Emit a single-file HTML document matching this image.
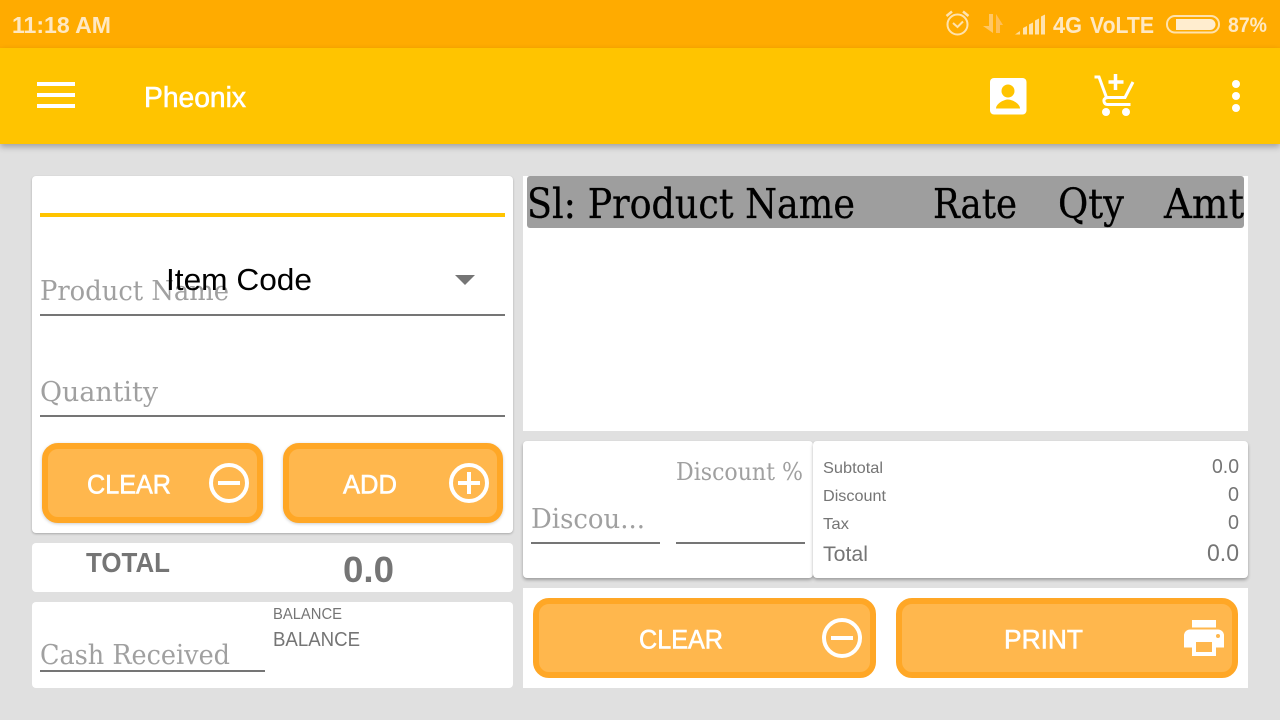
<!DOCTYPE html>
<html><head><meta charset="utf-8"><style>
html,body{margin:0;padding:0}
body{width:1280px;height:720px;position:relative;overflow:hidden;background:#e0e0e0;font-family:"Liberation Sans",sans-serif}
.a{position:absolute}
.card{position:absolute;background:#fff;border-radius:4px}
.sh{box-shadow:0 2px 3px rgba(0,0,0,.3)}
.line{position:absolute;height:2px;background:#757575}
.btn{position:absolute;box-sizing:border-box;background:#ffb74d;border:6px solid #ffa726;border-radius:16px;height:80px}
svg{position:absolute;left:0;top:0}
text{font-family:"Liberation Sans",sans-serif}
.s{font-family:"DejaVu Serif",serif;fill:#a0a0a0}
.k{font-family:"DejaVu Serif",serif;fill:#000;stroke:#000;stroke-width:.3px}
.g{fill:#757575}
.st{fill:#ffe8c2;font-weight:bold}
.w{fill:#fff;stroke:#fff;stroke-width:.6px}
</style></head><body>
<div class="a" style="left:0;top:0;width:1280px;height:48px;background:#ffab00"></div>
<div class="a" style="left:0;top:48px;width:1280px;height:96px;background:#ffc400;box-shadow:0 3px 6px rgba(0,0,0,.28)"></div>

<div class="a" style="left:37px;top:82px;width:38px;height:4px;background:#fff"></div>
<div class="a" style="left:37px;top:93px;width:38px;height:4px;background:#fff"></div>
<div class="a" style="left:37px;top:104px;width:38px;height:4px;background:#fff"></div>

<div class="card" style="left:32px;top:176px;width:481px;height:357px;box-shadow:0 1px 2px rgba(0,0,0,.25)"></div>
<div class="a" style="left:40px;top:213px;width:465px;height:4px;background:#ffc400"></div>
<div class="line" style="left:40px;top:314px;width:465px"></div>
<div class="line" style="left:40px;top:415px;width:465px"></div>
<div class="btn" style="left:42px;top:443px;width:221px;box-shadow:0 1px 3px rgba(0,0,0,.2)"></div>
<div class="btn" style="left:283px;top:443px;width:220px;box-shadow:0 1px 3px rgba(0,0,0,.2)"></div>

<div class="card" style="left:32px;top:543px;width:481px;height:49px"></div>
<div class="card" style="left:32px;top:602px;width:481px;height:86px"></div>
<div class="line" style="left:40px;top:670px;width:225px"></div>

<div class="a" style="left:523px;top:176px;width:725px;height:255px;background:#fff"></div>
<div class="a" style="left:527px;top:176px;width:717px;height:52px;background:#9e9e9e;border-radius:3px"></div>

<div class="card sh" style="left:523px;top:441px;width:290px;height:137px"></div>
<div class="card sh" style="left:813px;top:441px;width:435px;height:137px"></div>
<div class="line" style="left:531px;top:542px;width:129px"></div>
<div class="line" style="left:676px;top:542px;width:129px"></div>

<div class="a" style="left:523px;top:588px;width:725px;height:100px;background:#fff"></div>
<div class="btn" style="left:533px;top:598px;width:343px"></div>
<div class="btn" style="left:896px;top:598px;width:342px"></div>

<svg width="1280" height="720" viewBox="0 0 1280 720">
<!-- status bar -->
<text class="st" x="12" y="33" font-size="23" textLength="99" lengthAdjust="spacingAndGlyphs">11:18 AM</text>
<g fill="none" stroke="#ffe2ad" stroke-width="2">
<circle cx="957.500" cy="24.500" r="10"/>
<path d="M953 23l4.500 4 5.500-5.500"/>
<path d="M946.500 16l5.500-4.500M968.500 16l-5.500-4.500" stroke-width="2.500"/>
</g>
<path d="M989 14h4v19l-10-7h6z" fill="#ffc766"/>
<path d="M996 33h4v-8h3l-7-11z" fill="#ffbe57"/>
<g fill="#ffe2ad">
<path d="M1015 34.500l5-3.500v3.500z" opacity=".85"/>
<path d="M1023 34.500v-6.500l4-2v8.500z"/>
<path d="M1029 34.500v-10l4-2v12z"/>
<path d="M1035 34.500v-14l4-2v16z"/>
<path d="M1041 34.500v-18l4-2v20z"/>
</g>
<text class="st" x="1053" y="33" font-size="23" textLength="29" lengthAdjust="spacingAndGlyphs">4G</text>
<text class="st" x="1090" y="33" font-size="23" textLength="64" lengthAdjust="spacingAndGlyphs">VoLTE</text>
<rect x="1167" y="16" width="52" height="16.500" rx="8" fill="none" stroke="#ffe2ad" stroke-width="2"/>
<path d="M1176 19h34a5.500 5.500 0 0 1 0 11h-34z" fill="#ffedcf"/>
<text class="st" x="1228" y="32" font-size="21" textLength="39" lengthAdjust="spacingAndGlyphs">87%</text>

<!-- app bar -->
<text class="w" x="144" y="107" font-size="28.500" textLength="102" lengthAdjust="spacingAndGlyphs">Pheonix</text>
<rect x="990" y="78" width="36.500" height="36.500" rx="4" fill="#fff"/>
<circle cx="1008" cy="91" r="6.500" fill="#ffc400"/>
<path d="M996 108.500c0-5 8-9 12-9s12 4 12 9z" fill="#ffc400"/>
<g fill="none" stroke="#fff" stroke-width="3">
<path d="M1094.500 77h4.500l7.500 20.500"/>
<path d="M1133 82l-8 15.500h-17c-3 0-4.500 2-4 4 .4 1.800 1.500 3 3.500 3h23"/>
<path d="M1115.500 74v16M1108.500 82h15" stroke-width="3.500"/>
</g>
<circle cx="1106" cy="112" r="4" fill="#fff"/>
<circle cx="1126" cy="112" r="4" fill="#fff"/>
<circle cx="1236" cy="84" r="4" fill="#fff"/>
<circle cx="1236" cy="96" r="4" fill="#fff"/>
<circle cx="1236" cy="108" r="4" fill="#fff"/>

<!-- left form -->
<text class="s" x="40" y="300" font-size="27.500" textLength="189" lengthAdjust="spacingAndGlyphs">Product Name</text>
<text x="166" y="290" font-size="30.500" fill="#000" textLength="146" lengthAdjust="spacingAndGlyphs">Item Code</text>
<path d="M455 275h20l-10 10z" fill="#757575"/>
<text class="s" x="40" y="401" font-size="27.500" textLength="118" lengthAdjust="spacingAndGlyphs">Quantity</text>

<text class="w" x="87" y="493.500" font-size="27" textLength="84" lengthAdjust="spacingAndGlyphs">CLEAR</text>
<g fill="none" stroke="#fff" stroke-width="4"><circle cx="229" cy="483" r="18"/><path d="M218 483h22"/></g>
<text class="w" x="343" y="493.500" font-size="27" textLength="54" lengthAdjust="spacingAndGlyphs">ADD</text>
<g fill="none" stroke="#fff" stroke-width="4"><circle cx="469" cy="483" r="18"/><path d="M458 483h22M469 472v22"/></g>

<text class="g" x="86" y="572" font-size="27.500" font-weight="bold" textLength="84" lengthAdjust="spacingAndGlyphs">TOTAL</text>
<text class="g" x="343" y="582" font-size="36" font-weight="bold" textLength="51" lengthAdjust="spacingAndGlyphs">0.0</text>

<text class="s" x="40" y="664" font-size="27.500" textLength="190" lengthAdjust="spacingAndGlyphs">Cash Received</text>
<text class="g" x="273" y="619" font-size="15.500" textLength="69" lengthAdjust="spacingAndGlyphs">BALANCE</text>
<text class="g" x="273" y="646" font-size="20" textLength="87" lengthAdjust="spacingAndGlyphs">BALANCE</text>

<!-- table header -->
<text class="k" x="527" y="218" font-size="41" textLength="328" lengthAdjust="spacingAndGlyphs">Sl: Product Name</text>
<text class="k" x="933" y="218" font-size="41" textLength="84" lengthAdjust="spacingAndGlyphs">Rate</text>
<text class="k" x="1058" y="218" font-size="41" textLength="66" lengthAdjust="spacingAndGlyphs">Qty</text>
<text class="k" x="1164" y="218" font-size="41" textLength="80" lengthAdjust="spacingAndGlyphs">Amt</text>

<!-- discount -->
<text class="s" x="676" y="480" font-size="24.500" textLength="127" lengthAdjust="spacingAndGlyphs">Discount %</text>
<text class="s" x="531" y="528" font-size="27.500" textLength="114" lengthAdjust="spacingAndGlyphs">Discou...</text>

<!-- summary -->
<text class="g" x="823" y="473" font-size="16" textLength="60" lengthAdjust="spacingAndGlyphs">Subtotal</text>
<text class="g" x="823" y="501" font-size="16" textLength="63" lengthAdjust="spacingAndGlyphs">Discount</text>
<text class="g" x="823" y="529" font-size="16" textLength="26" lengthAdjust="spacingAndGlyphs">Tax</text>
<text class="g" x="823" y="561" font-size="21" textLength="45" lengthAdjust="spacingAndGlyphs">Total</text>
<text class="g" x="1212" y="473" font-size="20.500" textLength="27" lengthAdjust="spacingAndGlyphs">0.0</text>
<text class="g" x="1228" y="501" font-size="20.500" textLength="11" lengthAdjust="spacingAndGlyphs">0</text>
<text class="g" x="1228" y="529" font-size="20.500" textLength="11" lengthAdjust="spacingAndGlyphs">0</text>
<text class="g" x="1207" y="561" font-size="24" textLength="32" lengthAdjust="spacingAndGlyphs">0.0</text>

<!-- bottom buttons -->
<text class="w" x="639" y="648.500" font-size="27" textLength="84" lengthAdjust="spacingAndGlyphs">CLEAR</text>
<g fill="none" stroke="#fff" stroke-width="4"><circle cx="842" cy="638" r="18"/><path d="M831 638h22"/></g>
<text class="w" x="1004" y="648.500" font-size="27" textLength="79" lengthAdjust="spacingAndGlyphs">PRINT</text>
<path d="M1192 620h24v7.500h-24z" fill="#fff"/>
<path d="M1190 629.500h28a6 6 0 0 1 6 6v12h-8v8.500h-24v-8.500h-8v-12a6 6 0 0 1 6-6z" fill="#fff"/>
<rect x="1196" y="642" width="16" height="10" fill="#ffb74d"/>
<circle cx="1218" cy="636" r="2" fill="#ffb74d"/>
</svg>
</body></html>
